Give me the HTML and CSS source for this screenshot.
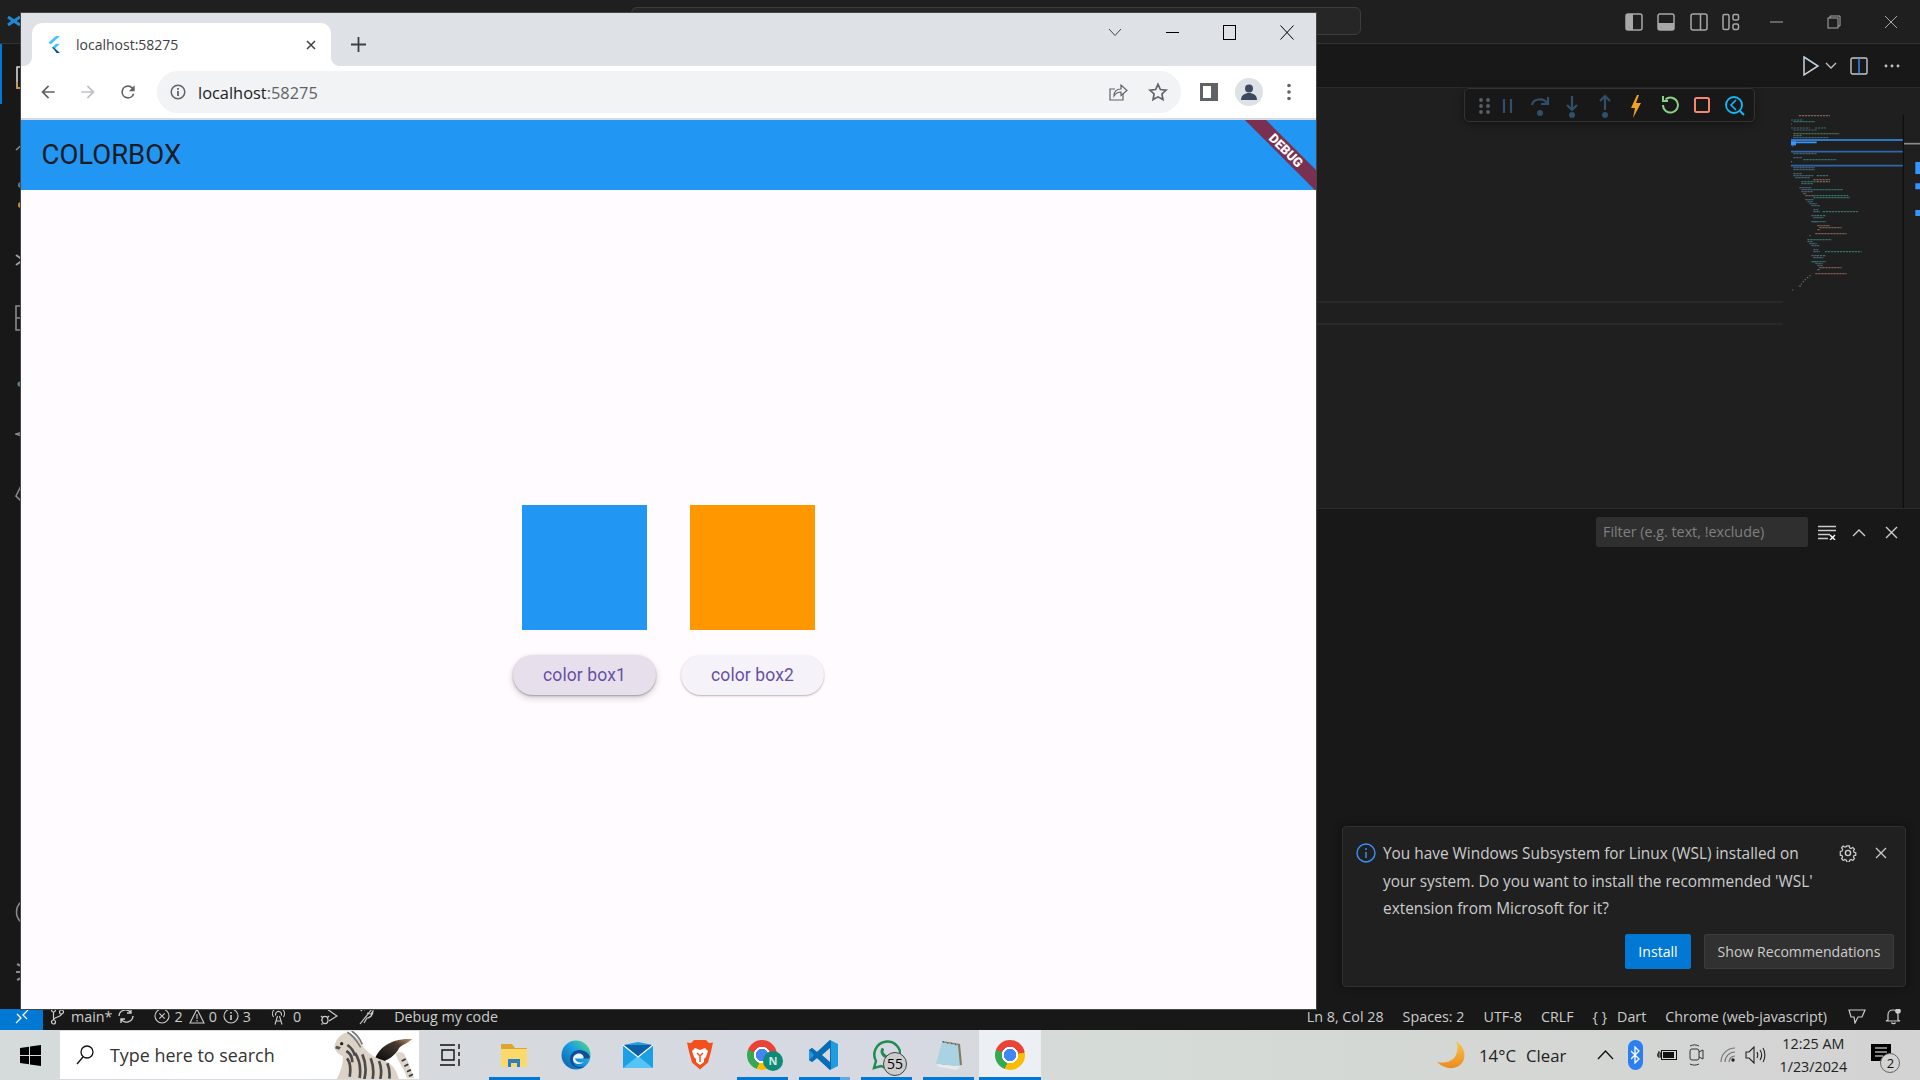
FILE: index.html
```html
<!DOCTYPE html>
<html lang="en">
<head>
    <meta charset="UTF-8">
    <title>COLORBOX</title>
    <link rel="stylesheet" href="styles.css">
</head>
<body>

    <div class="vscode">
        <!-- Заголовок окна VS Code -->
        <div class="titlebar">
            <div class="command-center"></div>
            <div class="layout-icons">
                <span class="title-cell"><svg width="18" height="18" viewBox="0 0 18 18"><rect x="1" y="1" width="16" height="16" rx="2" fill="none" stroke="#a8a8a8" stroke-width="1.5"/><rect x="1" y="1" width="7" height="16" fill="#a8a8a8"/></svg></span>
                <span class="title-cell"><svg width="18" height="18" viewBox="0 0 18 18"><rect x="1" y="1" width="16" height="16" rx="2" fill="none" stroke="#a8a8a8" stroke-width="1.5"/><rect x="1" y="10" width="16" height="7" fill="#a8a8a8"/></svg></span>
                <span class="title-cell"><svg width="18" height="18" viewBox="0 0 18 18"><rect x="1" y="1" width="16" height="16" rx="2" fill="none" stroke="#a8a8a8" stroke-width="1.5"/><path d="M10.5 1v16" stroke="#a8a8a8" stroke-width="1.5"/></svg></span>
                <span class="title-cell"><svg width="18" height="18" viewBox="0 0 18 18" fill="none" stroke="#a8a8a8" stroke-width="1.5"><rect x="1" y="1.5" width="6" height="15" rx="1.5"/><rect x="11" y="1.5" width="5.5" height="5.5" rx="1.5"/><rect x="11" y="11" width="5.5" height="5.5" rx="1.5"/></svg></span>
            </div>
            <div class="win-controls">
                <span class="win-cell"><svg width="14" height="14" viewBox="0 0 14 14"><path d="M1 7h13" stroke="#aaa"/></svg></span>
                <span class="win-cell"><svg width="14" height="14" viewBox="0 0 14 14" fill="none" stroke="#aaa"><rect x="1" y="3" width="10" height="10"/><path d="M3 3V1h10v10h-2"/></svg></span>
                <span class="win-cell"><svg width="14" height="14" viewBox="0 0 14 14"><path d="M1 1l12 12M13 1L1 13" stroke="#aaa"/></svg></span>
            </div>
        </div>

        <div class="vscode-main">
            <div class="activity-bar">
                <svg class="vscode-mark" width="14" height="14" viewBox="0 0 14 14"><path d="M1 3l12 8M1 11l12-8" stroke="#1f8ad2" stroke-width="3"/></svg>
                <div class="activity-top">
                    <span class="activity-item active"><svg width="30" height="30" viewBox="0 0 30 30" fill="none" stroke="#d7d7d7" stroke-width="1.6"><path d="M2 5h14l7 7v14H2z"/><path d="M2 20v6h5" stroke="#c9923e"/></svg></span>
                    <span class="activity-item"><svg width="30" height="30" viewBox="0 0 30 30" fill="none" stroke="#8a8a8a" stroke-width="1.6"><circle cx="16" cy="14" r="8"/><path d="M10 20L1 28"/></svg></span>
                    <span class="activity-item"><svg width="30" height="30" viewBox="0 0 30 30" fill="none" stroke="#8a8a8a" stroke-width="1.6"><circle cx="6" cy="3" r="2.2" stroke="#5d7a8c" fill="#5d7a8c"/><circle cx="6" cy="23" r="2.2" stroke="#c9923e" fill="#c9923e"/><circle cx="22" cy="10" r="2.5"/><path d="M6 5v16M22 12c0 6-16 4-16 10"/></svg></span>
                    <span class="activity-item"><svg width="30" height="30" viewBox="0 0 30 30" fill="none" stroke="#9aa0a6" stroke-width="2"><path d="M1 13l7 5M1 23l7-5M25 9l-5 4M25 15h-5M25 22l-5-4"/><ellipse cx="15" cy="16" rx="7" ry="8"/></svg></span>
                    <span class="activity-item"><svg width="30" height="30" viewBox="0 0 30 30" fill="none" stroke="#8a8a8a" stroke-width="1.6"><path d="M1 4h14v8h10v16H1zM1 16h14v12"/></svg></span>
                    <span class="activity-item"><svg width="30" height="30" viewBox="0 0 30 30" fill="none" stroke="#8a8a8a" stroke-width="1.6"><path d="M15 5L5 22h20z"/><circle cx="5" cy="22" r="1.8" fill="#5d7a8c" stroke="#5d7a8c"/></svg></span>
                    <span class="activity-item"><svg width="30" height="30" viewBox="0 0 30 30" fill="none" stroke="#8a8a8a" stroke-width="1.6"><path d="M24 6L1 12l23 8"/></svg></span>
                    <span class="activity-item"><svg width="30" height="30" viewBox="0 0 30 30" fill="none" stroke="#8a8a8a" stroke-width="1.6"><path d="M8 0L1 14l6 6h16V0z"/></svg></span>
                </div>
                <div class="activity-bottom">
                    <span class="activity-item"><svg width="30" height="30" viewBox="0 0 30 30" fill="none" stroke="#8a8a8a" stroke-width="1.6"><circle cx="15" cy="15" r="13.5"/><circle cx="15" cy="12" r="4"/></svg></span>
                    <span class="activity-item"><svg width="30" height="30" viewBox="0 0 30 30" fill="none" stroke="#8a8a8a" stroke-width="2"><circle cx="15" cy="15" r="5"/><path d="M2 7l8 4M1 15h9M2 23l8-4M24 7l-4 4M24 15h-4M24 23l-4-4M15 4v5M15 21v5"/></svg></span>
                </div>
            </div>

            <div class="workbench">
                <div class="editor-tabs">
                    <span class="tab-action"><svg width="20" height="22" viewBox="0 0 20 22"><path d="M3 2l14 9-14 9z" fill="none" stroke="#c5d3e0" stroke-width="1.5"/></svg></span>
                    <span class="tab-action small"><svg width="12" height="8" viewBox="0 0 12 8"><path d="M1 1l5 5 5-5" fill="none" stroke="#c5c5c5" stroke-width="1.3"/></svg></span>
                    <span class="tab-action split"><svg width="18" height="18" viewBox="0 0 18 18" fill="none" stroke="#c5c5c5" stroke-width="1.4"><rect x="1" y="1" width="16" height="16" rx="1.5"/><path d="M9 1v16" stroke="#3794ff"/></svg></span>
                    <span class="tab-action"><svg width="18" height="4" viewBox="0 0 18 4" fill="#c5c5c5"><circle cx="3" cy="2" r="1.4"/><circle cx="9" cy="2" r="1.4"/><circle cx="15" cy="2" r="1.4"/></svg></span>
                </div>

                <div class="editor">
                    <div class="editor-code">
                        <div class="line-highlight"></div>
                    </div>
                    <svg class="minimap" width="129" height="420" viewBox="33 -36 387 1260" fill="none" stroke-width="3.6">
                        <g stroke-dasharray="7 2" opacity="0.8">
                            <path stroke="#4f7388" d="M33 60H68M33 84H90M40 90H112M40 107H65M40 113H145M40 161H112M40 173H65M40 203H105M40 209H105M40 221H65M40 227H100M46 233H90M58 263H95M64 269H100M64 275H100M76 299H100M82 305H100M88 311H110M94 317H120M100 329H115M100 335H120M94 347H110M100 353H130M94 365H110M82 425H100M88 431H110M94 437H118M100 449H115M100 455H120M94 467H110M100 473H130M94 485H110M106 491H128M112 497H130"/>
                            <path stroke="#36877a" d="M40 65H105M105 84H138M70 179H170M110 227H145M64 245H110M64 251H100M100 269H190M100 287H205M100 293H210M128 335H235M110 347H138M100 365H138M82 419H155M135 455H245M110 467H138M100 485H138"/>
                            <path stroke="#97705c" d="M56 47H150M100 239H150M110 245H150M106 401H200M106 521H200M112 377H150M118 383H185M118 503H185"/>
                            <path stroke="#5d8248" d="M40 101H178"/>
                            <path stroke="#777" d="M33 72H36M36 138H40M33 185H36M70 281H80M76 287H100M112 389H120M88 407H92M112 509H120M88 527H92M80 533H85M74 539H78M68 545H72M62 552H66M56 558H66M36 570H40"/>
                        </g>
                        <path stroke="#3794ff" stroke-width="5" d="M33 120H369M33 127H110"/>
                        <path stroke="#3794ff" stroke-width="12" d="M33 130H48"/>
                        <path stroke="#2b69ac" stroke-width="5" d="M33 155H369M33 197H369"/>
                        <path stroke="#0b0b0b" stroke-width="3" d="M370 45V1260"/>
                        <path stroke="#8a8a8a" stroke-width="5" d="M372 131H420"/>
                        <path stroke="#3794ff" stroke-width="36" d="M406 204H420"/>
                        <path stroke="#3794ff" stroke-width="18" d="M406 259H420M406 339H420"/>
                    </svg>
                    <!-- Панель отладки висит над редактором -->
                    <div class="debug-toolbar">
                        <svg width="291" height="34" viewBox="0 0 291 34" fill="none">
                            <g fill="#5a6066"><circle cx="17" cy="12" r="1.9"/><circle cx="24" cy="12" r="1.9"/><circle cx="17" cy="18" r="1.9"/><circle cx="24" cy="18" r="1.9"/><circle cx="17" cy="24" r="1.9"/><circle cx="24" cy="24" r="1.9"/></g>
                            <path d="M40 11v14M47 11v14" stroke="#2f4f6b" stroke-width="2.2"/>
                            <g stroke="#2f4f6b" stroke-width="2.2"><path d="M68 17c1-6 11-8 15-2M84 9v7h-7"/><path d="M108 8v14M103 17l5 5 5-5"/><path d="M141 22V8M136 13l5-5 5 5"/></g>
                            <g fill="#2f4f6b"><circle cx="76" cy="25" r="3"/><circle cx="108" cy="27" r="3"/><circle cx="141" cy="27" r="3"/></g>
                            <path d="M173 7l-6 13h4l-2 10 8-15h-5l3-8z" fill="#f2a21e"/>
                            <path d="M199 17a7.5 7.5 0 1 0 2.500-5.500M199 8v5h5" stroke="#89d185" stroke-width="2"/>
                            <rect x="231" y="10" width="14" height="14" rx="1.5" stroke="#f48771" stroke-width="2"/>
                            <circle cx="270" cy="17" r="8" stroke="#13b9fd" stroke-width="1.8"/>
                            <path d="M276 23l4 4" stroke="#13b9fd" stroke-width="2"/>
                            <path d="M272 12l-5 5 5 5" stroke="#13b9fd" stroke-width="1.6"/>
                        </svg>
                    </div>
                </div>

                <div class="panel">
                    <div class="panel-filter">Filter (e.g. text, !exclude)</div>
                    <span class="panel-action"><svg width="18" height="15" viewBox="0 0 18 15"><path d="M0 1.5h18M0 5.5h18M0 9.5h12M0 13.5h10" stroke="#ccc" stroke-width="1.4"/><path d="M12 10l5 5M17 10l-5 5" stroke="#fff" stroke-width="1.4"/></svg></span>
                    <span class="panel-action"><svg width="14" height="9" viewBox="0 0 14 9"><path d="M1 8l6-6 6 6" fill="none" stroke="#ccc" stroke-width="1.4"/></svg></span>
                    <span class="panel-action"><svg width="13" height="13" viewBox="0 0 13 13"><path d="M1 1l11 11M12 1L1 12" stroke="#ccc" stroke-width="1.4"/></svg></span>
                </div>
            </div>

            <!-- Уведомление -->
            <div class="notification">
                <svg class="notif-info" width="20" height="20" viewBox="0 0 20 20" fill="none" stroke="#3794ff" stroke-width="1.4"><circle cx="10" cy="10" r="9"/><path d="M10 9v6M10 5v2"/></svg>
                <div class="notif-body">
                    <div class="notif-row">
                        <p>You have Windows Subsystem for Linux (WSL) installed on your system. Do you want to install the recommended 'WSL' extension from Microsoft for it?</p>
                        <svg class="notif-gear" width="18" height="18" viewBox="0 0 18 18" fill="none" stroke="#ccc" stroke-width="1.4"><circle cx="9" cy="9" r="2.6"/><path d="M7.6 1h2.8l.4 2.3 1.7.8 2-1.2 1.9 2-1.2 1.9.7 1.7 2 .5v2.8l-2 .5-.7 1.7 1.2 1.9-1.9 2-2-1.2-1.7.8-.4 2.2H7.6l-.4-2.2-1.7-.8-2 1.2-1.9-2 1.2-1.9-.7-1.7-2-.5V7.5l2-.5.7-1.7-1.2-1.9 1.9-2 2 1.2 1.7-.8z" transform="translate(1.2 .9) scale(.87)"/></svg>
                        <svg class="notif-close" width="12" height="12" viewBox="0 0 12 12"><path d="M1 1l10 10M11 1L1 11" stroke="#ccc" stroke-width="1.3"/></svg>
                    </div>
                    <div class="notif-buttons">
                        <button class="btn-install">Install</button>
                        <button class="btn-secondary">Show Recommendations</button>
                    </div>
                </div>
            </div>
        </div>

        <div class="statusbar">
            <div class="status-remote"><svg width="16" height="16" viewBox="0 0 16 16"><path d="M2 14l5-5-4-4M14 1L9 6l4 4" fill="none" stroke="#fff" stroke-width="1.3"/></svg></div>
            <div class="status-left">
                <span class="status-item"><svg width="15" height="18" viewBox="0 0 15 18" fill="none" stroke="#ccc" stroke-width="1.2"><circle cx="3.5" cy="3" r="2"/><circle cx="3.5" cy="15" r="2"/><circle cx="11.5" cy="5" r="2"/><path d="M3.5 5v8M11.5 7c0 3-8 3-8 6"/></svg>main*</span>
                <span class="status-item sync"><svg width="18" height="16" viewBox="0 0 18 16" fill="none" stroke="#ccc" stroke-width="1.4"><path d="M2 8a6.5 6.5 0 0 1 12-3M16 8a6.5 6.5 0 0 1-12 3M14 1v4h-4M4 15v-4h4"/></svg></span>
                <span class="status-item tight">
                    <svg width="16" height="16" viewBox="0 0 16 16" fill="none" stroke="#ccc" stroke-width="1.1"><circle cx="8" cy="8" r="7"/><path d="M5.3 5.3l5.4 5.4M10.7 5.3l-5.4 5.4"/></svg><span>2</span>
                    <svg width="16" height="16" viewBox="0 0 16 16" fill="none" stroke="#ccc" stroke-width="1.1"><path d="M8 1l7 14H1zM8 6v5M8 12v1.5"/></svg><span>0</span>
                    <svg width="16" height="16" viewBox="0 0 16 16" fill="none" stroke="#ccc" stroke-width="1.1"><circle cx="8" cy="8" r="7"/><path d="M8 7v5M8 4v1.6" stroke-width="1.6"/></svg><span>3</span>
                </span>
                <span class="status-item"><svg width="17" height="17" viewBox="0 0 17 17" fill="none" stroke="#ccc" stroke-width="1.1"><path d="M3.5 9a6 6 0 1 1 10 0M5.7 7.5a3 3 0 1 1 5.6 0M7.5 8l-2.5 8.5M9.5 8l2.5 8.5M6 13h5"/></svg>0</span>
                <span class="status-item"><svg width="18" height="18" viewBox="0 0 18 18" fill="none" stroke="#ccc" stroke-width="1.2"><path d="M7 2l10 7-8 5"/><ellipse cx="5" cy="13" rx="3" ry="3.6"/><path d="M1 9l2 2M9 9l-2 2M1 13h1M3 17H1"/></svg></span>
                <span class="status-item"><svg width="18" height="18" viewBox="0 0 18 18" fill="none" stroke="#ccc" stroke-width="1.2"><path d="M2 1l3 3M8 3L5 1M15 2L3 17M10 6l4 1 2-3c0 4-3 7-6 7l-3 5"/></svg></span>
                <span class="status-item">Debug my code</span>
            </div>
            <div class="status-right">
                <span>Ln 8, Col 28</span>
                <span>Spaces: 2</span>
                <span>UTF-8</span>
                <span>CRLF</span>
                <span class="status-lang"><span>{ }</span><span>Dart</span></span>
                <span>Chrome (web-javascript)</span>
                <svg class="status-feedback" width="18" height="16" viewBox="0 0 18 16" fill="none" stroke="#ccc" stroke-width="1.2"><path d="M1 2h16l-3 7h-4l-3 6-1-6H3z"/></svg>
                <svg width="17" height="18" viewBox="0 0 17 18" fill="none" stroke="#ccc" stroke-width="1.2"><path d="M3 13V8c0-3 2-5 5-5s5 2 5 5v5l2 1H1zM6.5 15.5c.5 1.5 3.5 1.5 4 0"/><circle cx="13" cy="4" r="2.8" fill="#ccc" stroke="none"/></svg>
            </div>
        </div>
    </div>

    <div class="taskbar">
        <div class="start-btn"><svg width="21" height="21" viewBox="0 0 21 21" fill="#000"><path d="M0 3l9-1.300V10H0zM10 1.500L21 0v10H10zM0 11h9v8.300L0 18zM10 11h11v10l-11-1.500z"/></svg></div>
        <div class="search-box">
            <svg class="search-icon" width="18" height="20" viewBox="0 0 18 20" fill="none" stroke="#111" stroke-width="1.3"><circle cx="11" cy="7" r="6"/><path d="M7 12L1 19"/></svg>
            <span class="search-text">Type here to search</span>
            <svg class="zebra" width="100" height="48" viewBox="0 18 300 144">
                <defs>
                    <linearGradient id="wing-grad" x1="0" x2="1" y1="1" y2="0"><stop offset="0.2" stop-color="#111"/><stop offset="0.7" stop-color="#4a3a30"/><stop offset="1" stop-color="#c89468"/></linearGradient>
                </defs>
                <path d="M165 110C175 70 215 38 280 42C265 55 245 62 240 70C230 90 210 105 175 118z" fill="url(#wing-grad)"/>
                <path d="M52 165C70 130 72 110 72 95C60 88 48 78 46 65C50 45 60 35 70 28C85 15 110 30 125 55C138 75 160 98 190 105C215 112 232 130 240 165z" fill="#dcd2c6"/>
                <g fill="none" stroke="#4c4a4a" stroke-width="8">
                    <path d="M85 60c15 10 20 18 22 32M82 78c14 8 18 20 18 34M84 100c10 12 12 30 8 55M108 84c14 20 18 45 14 75M130 88c10 22 12 50 6 75M155 100c8 20 10 40 6 62M180 108c8 18 8 36 4 54M205 115c6 14 8 30 6 46"/>
                </g>
                <g fill="none" stroke="#777" stroke-width="5"><path d="M85 22c15 8 30 28 40 45M98 18c12 8 24 22 32 40"/></g>
                <circle cx="68" cy="56" r="5" fill="#222"/>
                <path d="M48 70l12 4 6-8-14-4z" fill="#555"/>
                <path d="M232 92c-6-14 18-14 24-4c12 20 20 50 30 72h-22C258 135 240 115 232 92z" fill="#ddd4cb"/>
                <path d="M248 108l12-6M256 124l12-6M264 140l12-6M270 154l12-6" stroke="#333" stroke-width="5"/>
            </svg>
        </div>
        <div class="task-view"><svg width="22" height="24" viewBox="0 0 22 24" fill="none" stroke="#111" stroke-width="1.4"><path d="M0 2h15M0 22h15M2 7h12v10H2zM19 1v5M19 9v4M19 16v7"/></svg></div>
        <div class="task-icons">
            <span class="task-cell open">
                <svg width="28" height="28" viewBox="0 0 28 28"><path d="M1 3h11l3 4h12v19H1z" fill="#dfa52e"/><path d="M1 8h26v18H1z" fill="#fcd96b"/><path d="M8 18h12v8h-3v-4h-6v4H8z" fill="#2d7fc4"/></svg>
            </span>
            <span class="task-cell">
                <svg width="30" height="30" viewBox="0 0 30 30"><defs><linearGradient id="edge-grad" x1="0" y1="1" x2="1" y2="0"><stop offset="0" stop-color="#0c59a4"/><stop offset="0.55" stop-color="#1b9de2"/><stop offset="1" stop-color="#54df7c"/></linearGradient></defs><circle cx="15" cy="15" r="14.5" fill="url(#edge-grad)"/><path d="M29 17c-2-5-6-7-11-7c-5 0-9 4-9 9c0 5 4 9 9 9c3 0 4-.5 6-1.500C17 28 13 26 12 22c-1-5 3-8 7-7c2 .5 3 2 2.500 3.500H28z" fill="#0f4f95"/><path d="M12 19c0-3 3-6 7-5.500c2.500 .5 4 2.500 3.500 5H14c.5 3 4 5 9 3.500c-3 3-11 3-11-3z" fill="#e8f4f8"/></svg>
            </span>
            <span class="task-cell">
                <svg width="30" height="26" viewBox="0 0 30 26"><path d="M0 3l15-3 15 3v23H0z" fill="#1c9fe3"/><path d="M0 3h30L15 15z" fill="#0a5fa8"/><path d="M0 26l15-12 15 12z" fill="#56c4f5"/><path d="M0 3l15 12L30 3" fill="none" stroke="#fff" stroke-width="1.2"/></svg>
            </span>
            <span class="task-cell">
                <svg width="26" height="30" viewBox="0 0 26 30"><path d="M7 0h12l3 3 4-.5-2 9-3 11-8 7-8-7-3-11-2-9 4 .5z" fill="#f2501f"/><path d="M8 8l5 2 5-2 3 3-2 6-2 2v3l-4 3-4-3v-3l-2-2-2-6z" fill="#fff"/><path d="M10 13l3 3 3-3M13 16v6" stroke="#f2501f" stroke-width="1.500" fill="none"/></svg>
            </span>
            <span class="task-cell open">
                <span class="chrome-logo"></span>
                <span class="profile-badge">N</span>
            </span>
            <span class="task-cell open vs-open">
                <svg width="30" height="30" viewBox="0 0 30 30"><path d="M21 0l8 4v22l-8 4-13-12-5 4-3-2v-10l3-2 5 4z" fill="#1f9be0"/><path d="M21 0L8 12 3 8 0 10l5 5-5 5 3 2 5-4 13 12 1-1V1z" fill="#0a6cb5"/><path d="M21 8l-8 7 8 7z" fill="#d6d9e3"/></svg>
            </span>
            <span class="task-cell open">
                <svg width="30" height="30" viewBox="0 0 30 30" fill="none"><path d="M3 28l2-7a13 13 0 1 1 5 5z" stroke="#1e8e4f" stroke-width="2.500"/><path d="M10 9c1-2 3-1 3 1c0 1-1 1-.5 2c1 2 2 3 4 3.500c1 .5 1-1 2-.5c2 .5 2 2.500 .5 3c-6 2-11-4-9-9z" fill="#1e8e4f"/></svg>
                <span class="wa-badge">55</span>
            </span>
            <span class="task-cell open">
                <svg width="28" height="32" viewBox="0 0 28 32"><path d="M8 2l18 3 2 21-20 2z" fill="#86785e"/><path d="M8 3l16 3 2 21-24-2z" fill="#a9d3e2"/><path d="M2 25l24 2-3 4-18-3z" fill="#e6eaee"/><path d="M9 2l1 2M13 3l1 2M17 3.500l1 2M21 4.500l1 2" stroke="#666"/></svg>
            </span>
            <span class="task-cell open active">
                <span class="chrome-logo"></span>
            </span>
        </div>
        <div class="tray">
            <svg class="moon" width="28" height="28" viewBox="0 0 28 28"><defs><linearGradient id="moon-grad" x1="0" y1="0" x2="0" y2="1"><stop offset="0" stop-color="#f7c948"/><stop offset="1" stop-color="#ec8a1f"/></linearGradient></defs><path d="M19 0c8 5 11 15 6 22c-5 7-17 7-25-1c9 2 16-1 19-7c2-5 2-10 0-14z" fill="url(#moon-grad)"/></svg>
            <span class="weather-temp">14°C</span>
            <span class="weather-text">Clear</span>
            <svg class="tray-chevron" width="17" height="10" viewBox="0 0 17 10"><path d="M1 9l7.500-8L16 9" fill="none" stroke="#111" stroke-width="1.300"/></svg>
            <span class="bluetooth"><svg width="9" height="18" viewBox="0 0 9 18"><path d="M0 5l8 8-4 4V1l4 4-8 8" fill="none" stroke="#fff" stroke-width="1.300"/></svg></span>
            <svg class="tray-battery" width="20" height="14" viewBox="0 0 20 14"><path d="M0 7h4M2 3v2M1 5h3v4H1z" stroke="#111" fill="none"/><rect x="4.500" y="2.500" width="15" height="9" fill="none" stroke="#111"/><rect x="6" y="4" width="11" height="6" fill="#111"/></svg>
            <svg class="tray-meet" width="15" height="22" viewBox="0 0 15 22" fill="none" stroke="#333"><rect x="1" y="5" width="9" height="11" rx="2"/><path d="M10 8l4-2v9l-4-2M1 2c3-1.500 6-1.500 9 0M1 20c3 1.500 6 1.500 9 0"/></svg>
            <svg class="tray-wifi" width="16" height="16" viewBox="0 0 16 16" fill="none" stroke="#777" stroke-width="1.200"><path d="M1 15A14 14 0 0 1 15 1M5 15A10 10 0 0 1 15 5M9 15a6 6 0 0 1 6-6"/><circle cx="13" cy="13" r="1.700" fill="#222" stroke="none"/></svg>
            <svg class="tray-volume" width="21" height="18" viewBox="0 0 21 18" fill="none" stroke="#222" stroke-width="1.100"><path d="M1 6h3l5-5v16l-5-5H1zM12 6c1 2 1 4 0 6M15 4c2 3 2 7 0 10M18 2c2.500 4 2.500 10 0 14"/></svg>
            <div class="clock">
                <span>12:25 AM</span>
                <span>1/23/2024</span>
            </div>
            <div class="action-center">
                <svg width="20" height="18" viewBox="0 0 20 18"><path d="M0 0h20v17H0z" fill="#000"/><path d="M4 4h12M4 8h12M4 12h8" stroke="#fff" stroke-width="1.100"/></svg>
                <span class="action-badge">2</span>
            </div>
        </div>
    </div>

    <!-- Окно браузера поверх VS Code -->
    <div class="chrome-window">
        <div class="tabstrip">
            <div class="tab">
                <svg class="favicon" width="14" height="17" viewBox="0 0 14 17"><path d="M9 0h4L3.500 8.500 1.500 6.500z" fill="#47c5fb"/><path d="M9 7.800h4L7 13.500 5 11.500z" fill="#47c5fb"/><path d="M5 11.500l2 2 2.500 3.500H13l-6-5.500z" fill="#00569e"/></svg>
                <span class="tab-title">localhost:58275</span>
                <svg class="tab-close" width="10" height="10" viewBox="0 0 10 10"><path d="M1 1l8 8M9 1L1 9" stroke="#3c4043" stroke-width="1.500"/></svg>
            </div>
            <div class="new-tab"><svg width="15" height="15" viewBox="0 0 15 15"><path d="M7.500 0v15M0 7.500h15" stroke="#3c4043" stroke-width="1.800"/></svg></div>
            <div class="caption-btn first"><svg width="14" height="9" viewBox="0 0 14 9"><path d="M1 1l6 6.500L13 1" fill="none" stroke="#444"/></svg></div>
            <div class="caption-btn"><svg width="13" height="3" viewBox="0 0 13 3"><path d="M0 1.500h13" stroke="#000"/></svg></div>
            <div class="caption-btn"><svg width="13" height="15" viewBox="0 0 13 15"><rect x=".5" y=".5" width="12" height="14" fill="none" stroke="#000"/></svg></div>
            <div class="caption-btn"><svg width="14" height="15" viewBox="0 0 14 15"><path d="M.5 .5l13 14M13.500 .5L.5 14.500" stroke="#000"/></svg></div>
        </div>

        <div class="toolbar">
            <span class="nav-btn"><svg width="20" height="20" viewBox="0 0 24 24" fill="#5f6368"><path d="M20 11H7.830l5.590-5.590L12 4l-8 8 8 8 1.410-1.410L7.830 13H20v-2z"/></svg></span>
            <span class="nav-btn"><svg width="20" height="20" viewBox="0 0 24 24" fill="#bdc1c6"><path d="M4 11h12.170l-5.590-5.590L12 4l8 8-8 8-1.410-1.410L16.170 13H4v-2z"/></svg></span>
            <span class="nav-btn"><svg width="20" height="20" viewBox="0 0 24 24" fill="#5f6368"><path d="M17.650 6.350A7.950 7.950 0 0 0 12 4a8 8 0 1 0 7.730 10h-2.080A6 6 0 1 1 12 6c1.660 0 3.140.69 4.220 1.780L13 11h7V4l-2.350 2.350z"/></svg></span>
            <div class="omnibox">
                <svg class="omni-info" width="16" height="16" viewBox="0 0 16 16" fill="none" stroke="#5f6368" stroke-width="1.500"><circle cx="8" cy="8" r="6.800"/><path d="M8 7v5M8 4v1.800" stroke-width="1.800"/></svg>
                <span class="url">localhost<span class="url-port">:58275</span></span>
                <svg class="omni-share" width="20" height="20" viewBox="0 0 20 20" fill="none" stroke="#5f6368" stroke-width="1.200"><path d="M15 12v6H2V7h5"/><path d="M6 14c0-5 3-7 7-7V3l6 5.500-6 5V10c-3 0-5 1-7 4z"/></svg>
                <svg class="omni-star" width="20" height="20" viewBox="0 0 24 24" fill="none" stroke="#5f6368" stroke-width="2"><path d="M12 2.800l2.900 6.200 6.800.8-5 4.600 1.300 6.700-6-3.300-6 3.300 1.300-6.700-5-4.600 6.800-.8z"/></svg>
            </div>
            <span class="nav-btn first-action"><svg width="18" height="18" viewBox="0 0 18 18"><path d="M0 0h18v18H0z" fill="#5f6368"/><path d="M3 3h8v12H3z" fill="#fff"/></svg></span>
            <span class="nav-btn"><span class="avatar"><svg width="18" height="18" viewBox="0 0 18 18" fill="#3c4a5e"><circle cx="9" cy="5.500" r="4"/><path d="M1 17c0-5 4-7 8-7s8 2 8 7z"/></svg></span></span>
            <span class="nav-btn"><svg width="4" height="18" viewBox="0 0 4 18" fill="#5f6368"><circle cx="2" cy="2.500" r="1.800"/><circle cx="2" cy="9" r="1.800"/><circle cx="2" cy="15.500" r="1.800"/></svg></span>
        </div>

        <div class="app-bar">
            <span class="app-title">COLORBOX</span>
            <div class="debug-banner">DEBUG</div>
        </div>

        <div class="app-body">
            <div class="box-col">
                <div class="color-box box-blue"></div>
                <div class="box-btn pressed">color box1</div>
            </div>
            <div class="box-col">
                <div class="color-box box-orange"></div>
                <div class="box-btn">color box2</div>
            </div>
        </div>
    </div>

</body>
</html>
```

FILE: styles.css
```css
* {
    box-sizing: border-box;
}

body {
    margin: 0;
    width: 1920px;
    height: 1080px;
    overflow: hidden;
    position: relative;
    display: flex;
    flex-direction: column;
    font-family: "Open Sans", sans-serif;
    background-color: #181818;
}

svg {
    display: block;
    flex-shrink: 0;
}

/* VS Code */
.vscode {
    height: 1030px;
    display: flex;
    flex-direction: column;
    color: #ccc;
}

.titlebar {
    height: 44px;
    background-color: #1f1f1f;
    border-bottom: 1px solid #333;
    display: flex;
    align-items: center;
    padding-left: 631px;
}

.command-center {
    width: 730px;
    height: 28px;
    background-color: #262626;
    border: 1px solid #3c3c3c;
    border-radius: 6px;
    margin-top: -1px;
}

.layout-icons {
    display: flex;
    margin-left: auto;
}

.title-cell {
    width: 32.5px;
    display: flex;
    justify-content: center;
}

.win-controls {
    display: flex;
}

.win-cell {
    width: 57.5px;
    display: flex;
    justify-content: center;
}

.vscode-main {
    flex: 1;
    display: flex;
    position: relative;
    min-height: 0;
}

.activity-bar {
    width: 60px;
    background-color: #181818;
    display: flex;
    flex-direction: column;
    justify-content: space-between;
    padding-top: 3px;
    padding-bottom: 7px;
}

.vscode-mark {
    position: absolute;
    left: 7px;
    top: -30px;
}

.activity-item {
    height: 60px;
    display: flex;
    align-items: center;
    justify-content: center;
    position: relative;
}

.activity-item.active::before {
    content: "";
    position: absolute;
    left: 0;
    top: -3px;
    width: 2px;
    height: 60px;
    background-color: #0078d4;
}

.workbench {
    flex: 1;
    display: flex;
    flex-direction: column;
    min-width: 0;
}

.editor-tabs {
    height: 44px;
    background-color: #181818;
    border-bottom: 1px solid #2b2b2b;
    display: flex;
    align-items: center;
    justify-content: flex-end;
    padding-right: 13px;
    flex-shrink: 0;
}

.tab-action {
    width: 30px;
    display: flex;
    justify-content: center;
}

.tab-action.small {
    width: 14px;
    margin-left: -2px;
}

.tab-action.split {
    margin-left: 6px;
    margin-right: 3px;
}

.editor {
    height: 421px;
    background-color: #1f1f1f;
    border-bottom: 1px solid #2b2b2b;
    display: flex;
    position: relative;
    flex-shrink: 0;
}

.editor-code {
    flex: 1;
    margin-right: 8px;
}

.line-highlight {
    margin-top: 213px;
    height: 24px;
    border-top: 2px solid #282828;
    border-bottom: 2px solid #282828;
}

.debug-toolbar {
    position: absolute;
    top: 0;
    right: 165px;
    width: 291px;
    height: 34px;
    background-color: #181818;
    border: 1px solid #333;
    border-radius: 5px;
    box-shadow: 0 2px 8px rgba(0, 0, 0, 0.36);
}

.debug-toolbar svg {
    margin: -1px;
}

.panel {
    flex: 1;
    background-color: #181818;
    display: flex;
    justify-content: flex-end;
    align-items: flex-start;
    padding: 8px 13px 0 0;
}

.panel-filter {
    width: 212px;
    height: 30px;
    background-color: #2f2f2f;
    border-radius: 2px;
    color: #808080;
    font-size: 14.3px;
    line-height: 30px;
    padding-left: 7px;
    margin-right: 3px;
}

.panel-action {
    width: 32px;
    height: 30px;
    display: flex;
    align-items: center;
    justify-content: center;
}

.notification {
    position: absolute;
    right: 14px;
    bottom: 22px;
    width: 564px;
    height: 161px;
    background-color: #202020;
    border: 1px solid #303030;
    border-radius: 4px;
    display: flex;
    padding: 16px 11px 0 13px;
    box-shadow: 0 0 8px rgba(0, 0, 0, 0.36);
}

.notif-info {
    margin-right: 7px;
}

.notif-body {
    flex: 1;
}

.notif-row {
    display: flex;
    align-items: flex-start;
}

.notif-row p {
    margin: -3px 0 0;
    width: 440px;
    font-size: 15.4px;
    line-height: 27.7px;
    color: #ccc;
}

.notif-gear {
    margin-left: 16px;
    margin-top: 1px;
}

.notif-close {
    margin-left: 18px;
    margin-top: 4px;
}

.notif-buttons {
    display: flex;
    justify-content: flex-end;
    gap: 13px;
    margin-top: 11px;
}

.notif-buttons button {
    height: 35px;
    border-radius: 2px;
    font-family: "Open Sans", sans-serif;
    font-size: 14.1px;
    padding: 0;
}

.btn-install {
    width: 66px;
    background-color: #0078d4;
    border: 1px solid #0078d4;
    color: #fff;
}

.btn-secondary {
    width: 190px;
    background-color: #313131;
    border: 1px solid #3c3c3c;
    color: #ccc;
}

.statusbar {
    height: 21px;
    background-color: #181818;
    display: flex;
    align-items: center;
    font-size: 14.3px;
    color: #ccc;
    flex-shrink: 0;
}

.status-remote {
    width: 43px;
    height: 21px;
    padding-bottom: 5px;
    background-color: #0078d4;
    display: flex;
    align-items: center;
    justify-content: center;
}

.status-left {
    display: flex;
    align-items: center;
    gap: 19px;
    padding-left: 7px;
    padding-bottom: 7px;
}

.status-item {
    display: flex;
    align-items: center;
    gap: 6px;
}

.status-item.sync {
    margin-left: -14px;
}

.status-item.tight {
    gap: 4px;
}

.status-item.tight span + svg {
    margin-left: 2px;
}

.status-right {
    display: flex;
    align-items: center;
    gap: 19px;
    margin-left: auto;
    padding-right: 18px;
    padding-bottom: 7px;
}

.status-feedback {
    margin-left: 2px;
}

.status-lang {
    display: flex;
    gap: 10px;
}

/* Панель задач */
.taskbar {
    height: 50px;
    background: linear-gradient(to right, #d5dbdb 0, #d6dade 480px, #d6d9e3 900px, #d5dbd6 1100px, #d3d3d3 1920px);
    display: flex;
    align-items: center;
}

.start-btn {
    width: 60px;
    display: flex;
    justify-content: center;
}

.search-box {
    width: 359px;
    height: 48px;
    background-color: #fff;
    display: flex;
    align-items: center;
    padding-left: 16px;
    overflow: hidden;
}

.search-text {
    margin-left: 16px;
    font-size: 17.9px;
    color: #333;
}

.zebra {
    margin-left: auto;
}

.task-view {
    width: 65px;
    margin-left: -1px;
    display: flex;
    justify-content: center;
}

.task-icons {
    display: flex;
    height: 50px;
}

.task-cell {
    width: 62px;
    height: 50px;
    position: relative;
    display: flex;
    align-items: center;
    justify-content: center;
}

.task-cell.open::after {
    content: "";
    position: absolute;
    left: 5.5px;
    right: 5.5px;
    bottom: 0;
    height: 3px;
    background-color: #0078d4;
}

.task-cell.vs-open::after {
    background: linear-gradient(to right, #0078d4 80%, #66a8e0 80%);
}

.task-cell.active {
    background-color: #eceff3;
}

.task-cell.active::after {
    left: 0;
    right: 0;
}

.chrome-logo {
    width: 30px;
    height: 30px;
    border-radius: 50%;
    background:
        radial-gradient(circle, #4285f4 0 6px, #fff 6.5px 8px, transparent 8.5px),
        conic-gradient(from -70deg, #ea4335 0 150deg, #fbbc04 150deg 270deg, #34a853 270deg 360deg);
}

.profile-badge {
    position: absolute;
    left: 32px;
    top: 21px;
    width: 20px;
    height: 20px;
    border-radius: 50%;
    background-color: #0f8a78;
    color: #cfe8e3;
    font-size: 11px;
    font-weight: 700;
    line-height: 20px;
    text-align: center;
}

.wa-badge {
    position: absolute;
    left: 28px;
    top: 22px;
    width: 24px;
    height: 24px;
    border-radius: 50%;
    background-color: #ccc;
    border: 1px solid #444;
    color: #000;
    font-size: 14px;
    line-height: 22px;
    text-align: center;
}

.tray {
    flex: 1;
    display: flex;
    align-items: center;
}

.moon {
    margin-left: 396px;
}

.weather-temp {
    margin-left: 14px;
    font-size: 16.8px;
    color: #222;
}

.weather-text {
    margin-left: 10px;
    font-size: 16.8px;
    color: #222;
}

.tray-chevron {
    margin-left: 31px;
}

.bluetooth {
    width: 15px;
    height: 30px;
    margin-left: 14px;
    border-radius: 8px;
    background-color: #2b7ff0;
    display: flex;
    align-items: center;
    justify-content: center;
}

.tray-battery {
    margin-left: 14px;
}

.tray-meet {
    margin-left: 12px;
}

.tray-wifi {
    margin-left: 16px;
}

.tray-volume {
    margin-left: 9px;
}

.clock {
    width: 68px;
    margin-left: 13px;
    display: flex;
    flex-direction: column;
    align-items: center;
    gap: 4px;
    font-size: 14.3px;
    line-height: 19px;
    color: #222;
}

.action-center {
    position: relative;
    margin-left: 24px;
    margin-top: -4px;
}

.action-badge {
    position: absolute;
    left: 9px;
    top: 9px;
    width: 20px;
    height: 20px;
    border-radius: 50%;
    border: 1px solid #666;
    background-color: #d3d3d3;
    color: #111;
    font-size: 13px;
    line-height: 18px;
    text-align: center;
}

/* Окно браузера */
.chrome-window {
    position: absolute;
    left: 21px;
    top: 13px;
    width: 1295px;
    height: 996px;
    display: flex;
    flex-direction: column;
    background-color: #fffbfe;
    box-shadow: 0 0 0 1px #444;
    overflow: hidden;
}

.tabstrip {
    height: 53px;
    background-color: #dee1e6;
    display: flex;
    align-items: flex-end;
    padding-left: 11px;
    flex-shrink: 0;
}

.tab {
    width: 299px;
    height: 43px;
    background-color: #fff;
    border-radius: 10px 10px 0 0;
    display: flex;
    align-items: center;
    padding: 0 15px 0 15px;
    position: relative;
}

.tab::before,
.tab::after {
    content: "";
    position: absolute;
    bottom: 0;
    width: 8px;
    height: 8px;
}

.tab::before {
    left: -8px;
    background: radial-gradient(circle at 0 0, #dee1e6 7.5px, #fff 8px);
}

.tab::after {
    right: -8px;
    background: radial-gradient(circle at 100% 0, #dee1e6 7.5px, #fff 8px);
}

.tab-title {
    margin-left: 15px;
    font-size: 14px;
    color: #3c4043;
}

.tab-close {
    margin-left: auto;
}

.new-tab {
    width: 54px;
    height: 43px;
    display: flex;
    align-items: center;
    justify-content: center;
}

.caption-btn {
    width: 57.5px;
    height: 38px;
    align-self: flex-start;
    display: flex;
    align-items: center;
    justify-content: center;
}

.caption-btn.first {
    margin-left: auto;
}

.toolbar {
    height: 54px;
    background-color: #fff;
    border-bottom: 2px solid #d6d9dd;
    padding-left: 7px;
    display: flex;
    align-items: center;
    flex-shrink: 0;
}

.nav-btn {
    width: 40px;
    display: flex;
    justify-content: center;
    align-items: center;
}

.omnibox {
    width: 1024px;
    height: 42px;
    margin-left: 9px;
    background-color: #f1f3f4;
    border-radius: 21px;
    display: flex;
    align-items: center;
    padding: 0 13px 0 13px;
}

.url {
    margin-left: 12px;
    font-size: 16.4px;
    color: #202124;
}

.url-port {
    color: #5f6368;
}

.omni-share {
    margin-left: auto;
}

.omni-star {
    margin-left: 20px;
}

.first-action {
    margin-left: 8px;
}

.avatar {
    width: 28px;
    height: 28px;
    border-radius: 50%;
    background-color: #dee1e6;
    display: flex;
    align-items: center;
    justify-content: center;
}

.app-bar {
    height: 70px;
    background-color: #2196f3;
    display: flex;
    align-items: center;
    padding-left: 20.5px;
    padding-bottom: 2px;
    position: relative;
    overflow: hidden;
    flex-shrink: 0;
}

.app-title {
    font-family: Roboto, sans-serif;
    font-size: 27.5px;
    color: #1c1b1f;
}

.debug-banner {
    position: absolute;
    left: 1205px;
    top: 23px;
    width: 120px;
    height: 15px;
    background-color: #7a3050;
    color: #fff;
    font-family: Roboto, sans-serif;
    font-size: 13px;
    font-weight: 900;
    line-height: 15px;
    text-align: center;
    transform: rotate(45deg);
}

.app-body {
    flex: 1;
    display: flex;
    align-items: center;
    justify-content: center;
    gap: 25px;
}

.box-col {
    display: flex;
    flex-direction: column;
    align-items: center;
    gap: 25px;
}

.color-box {
    width: 125px;
    height: 125px;
}

.box-blue {
    background-color: #2196f3;
}

.box-orange {
    background-color: #ff9800;
}

.box-btn {
    width: 143px;
    height: 40px;
    border-radius: 20px;
    background-color: #f5f2f9;
    color: #6750a4;
    font-family: Roboto, sans-serif;
    font-size: 17.5px;
    letter-spacing: 0.12px;
    line-height: 40px;
    text-align: center;
    box-shadow: 0 1px 2px rgba(0, 0, 0, 0.3);
}

.box-btn.pressed {
    background-color: #e7e0ec;
    box-shadow: 0 1px 2px rgba(0, 0, 0, 0.3), 0 3px 6px 1px rgba(0, 0, 0, 0.15);
}
```
